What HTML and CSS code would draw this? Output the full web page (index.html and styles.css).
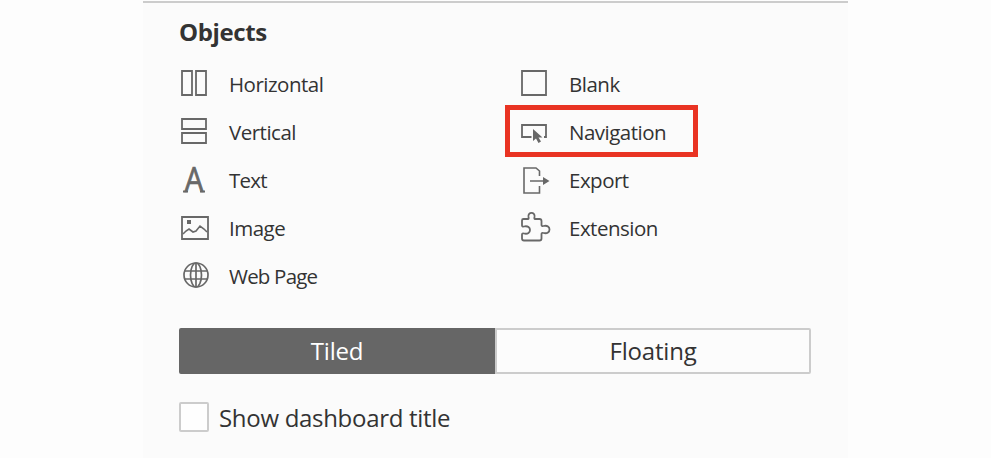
FILE: index.html
```html
<!DOCTYPE html>
<html lang="en">
<head>
<meta charset="utf-8">
<title>Dashboard objects</title>
<link rel="stylesheet" href="styles.css">
</head>
<body>
<main class="panel">
  <h2 class="heading">Objects</h2>
  <div class="objects">
    <ul class="list">
      <li class="item"><svg class="icon" viewBox="0 0 36 48"><path d="M3 11h10v24H3zM17 11h10v24H17z"/></svg><span class="label">Horizontal</span></li>
      <li class="item"><svg class="icon" viewBox="0 0 36 48"><path d="M3 11h24v10H3zM3 25h24v10H3z"/></svg><span class="label">Vertical</span></li>
      <li class="item"><svg class="icon" viewBox="0 0 36 48"><text class="letter" x="5.5" y="36" textLength="19" lengthAdjust="spacingAndGlyphs">A</text><path d="M4 35.5h5M21 35.5h5"/></svg><span class="label tight">Text</span></li>
      <li class="item"><svg class="icon" viewBox="0 0 36 48"><path d="M3 13h26v22H3z"/><path class="fine" d="M4 30l3-3 3-2 4 3 3-1 4-5 4 3 3 3"/><path class="solid" d="M8 16h4v4H8z"/></svg><span class="label">Image</span></li>
      <li class="item"><svg class="icon" viewBox="0 0 36 48"><g class="globe"><circle cx="17" cy="23" r="12"/><ellipse cx="17" cy="23" rx="5.5" ry="12"/><path d="M17 11v24M6 19h22M6 27h22"/></g></svg><span class="label tight">Web Page</span></li>
    </ul>
    <ul class="list">
      <li class="item"><svg class="icon" viewBox="0 0 36 48"><path d="M3 11h24v24H3z"/></svg><span class="label">Blank</span></li>
      <li class="item selected"><svg class="icon" viewBox="0 0 36 48"><path d="M12.500 29H3V17h24v12h-2"/><path class="solid" d="M14 21l9.500 8.500h-4l2.500 4-2.500 1.500-2.500-4.500-3 2.500z"/></svg><span class="label">Navigation</span></li>
      <li class="item"><svg class="icon" viewBox="0 0 36 48"><path class="fine" d="M20.500 20v-5l-3.500-3H5v25h15.500v-7M11 25h14"/><path class="solid" d="M24 21l6.500 4-6.500 4z"/></svg><span class="label">Export</span></li>
      <li class="item"><svg class="icon" viewBox="0 0 36 48"><path d="M3 16.500q0-1.500 1.500-1.500H9q1 0 .500-2C8.500 7.500 16.500 7.500 15.500 13q-.500 2 .500 2h4.500q2 0 2 2v4q0 1.500 2 1c8-2 8 9 0 7q-2-.500-2 1v4.500q0 2-2 2H5q-2 0-2-2v-4q0-1.500 2-1c8 2 8-9 0-7q-2 .500-2-1z"/></svg><span class="label">Extension</span></li>
    </ul>
  </div>
  <div class="segments">
    <button class="segment active">Tiled</button>
    <button class="segment">Floating</button>
  </div>
  <div class="option"><span class="checkbox"></span><span class="option-label">Show dashboard title</span></div>
</main>
</body>
</html>
```
FILE: styles.css
```css
*, *::after { box-sizing: border-box; }
body {
  margin: 0;
  height: 458px;
  overflow: hidden;
  background: #fdfdfd;
  color: #333;
  font-family: "Open Sans", sans-serif;
}
.panel {
  width: 705px;
  height: 457px;
  margin: 1px 0 0 143px;
  padding: 0 36px;
  border-top: 2px solid #ccc;
  background: #fbfbfb;
}
.heading {
  margin: 0;
  height: 57px;
  font-size: 24px;
  line-height: 58px;
  font-weight: 700;
  letter-spacing: -0.4px;
}
.objects {
  display: grid;
  grid-template-columns: 340px 293px;
  height: 268px;
}
.list { margin: 0; padding: 0; list-style: none; }
.item {
  position: relative;
  display: flex;
  align-items: center;
  gap: 14px;
  height: 48px;
}
.icon {
  width: 36px;
  height: 48px;
  fill: none;
  stroke: #686868;
  stroke-width: 1.8;
}
.fine { stroke-width: 1.6; }
.globe { stroke-width: 1.7; }
.solid { fill: #686868; stroke: none; }
.letter {
  fill: #686868;
  stroke-width: 0.7;
  font: 400 35px "Open Sans", sans-serif;
}
.label {
  font-size: 20.5px;
  line-height: 48px;
  letter-spacing: -0.5px;
  white-space: nowrap;
}
.tight { letter-spacing: -0.8px; }
.selected::after {
  content: "";
  position: absolute;
  left: -14px;
  top: -3px;
  width: 193px;
  height: 52px;
  border: 5px solid #e93323;
}
.segments {
  display: grid;
  grid-template-columns: 316px 316px;
  height: 46px;
}
.segment {
  padding: 0;
  border: 2px solid #ccc;
  border-radius: 0 2px 2px 0;
  background: #fcfcfc;
  color: #333;
  font: 24px/40px "Open Sans", sans-serif;
  letter-spacing: -0.2px;
}
.active {
  border-color: #666;
  border-radius: 2px 0 0 2px;
  background: #666;
  color: #fff;
}
.option {
  display: flex;
  align-items: center;
  gap: 10px;
  height: 30px;
  margin-top: 28px;
}
.checkbox {
  width: 30px;
  height: 30px;
  border: 2px solid #ccc;
  border-radius: 2px;
  background: #fefefe;
}
.option-label {
  padding-top: 2px;
  font-size: 24px;
  line-height: 30px;
  letter-spacing: -0.3px;
  white-space: nowrap;
}
```
